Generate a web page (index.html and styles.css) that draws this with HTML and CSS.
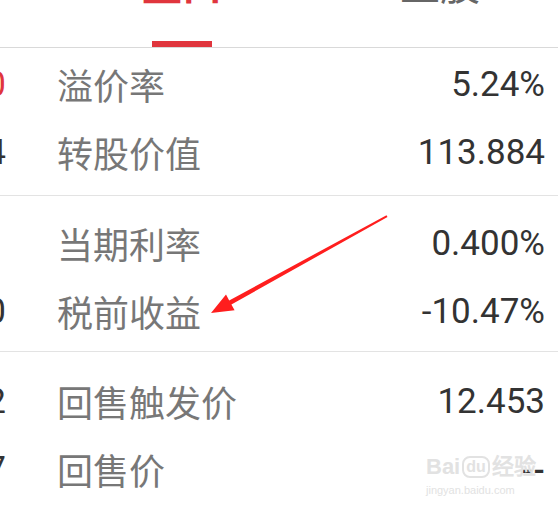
FILE: index.html
```html
<!DOCTYPE html>
<html lang="zh-CN">
<head>
  <meta charset="UTF-8">
  <title>转债盘口</title>
  <link rel="stylesheet" href="styles.css">
</head>
<body>
  <div class="page">
    <div class="tabs">
      <div class="tab active">
        <span class="tab-text">盘口</span>
        <span class="tab-bar"></span>
      </div>
      <div class="tab">
        <span class="tab-text">正股</span>
      </div>
    </div>

    <div class="group group-first">
      <div class="row">
        <span class="lead up">10.0</span>
        <span class="label">溢价率</span>
        <span class="value">5.24%</span>
      </div>
      <div class="row">
        <span class="lead">1.14</span>
        <span class="label">转股价值</span>
        <span class="value">113.884</span>
      </div>
    </div>

    <div class="group">
      <div class="row">
        <span class="lead">2021</span>
        <span class="label">当期利率</span>
        <span class="value">0.400%</span>
      </div>
      <div class="row">
        <span class="lead">3.50</span>
        <span class="label">税前收益</span>
        <span class="value">-10.47%</span>
      </div>
    </div>

    <div class="group group-last">
      <div class="row">
        <span class="lead">5.12</span>
        <span class="label">回售触发价</span>
        <span class="value">12.453</span>
      </div>
      <div class="row">
        <span class="lead">2027</span>
        <span class="label">回售价</span>
        <span class="value value-empty">--</span>
      </div>
    </div>

    <!-- red annotation arrow drawn over the list -->
    <svg class="arrow" width="558" height="510" viewBox="0 0 558 510">
      <polygon fill="#ff1e1e" points="211,313 226,294.6 229.2,300.4 386.5,215.2 387.5,217 231.4,304.4 234.6,310.2"/>
    </svg>

    <div class="watermark">
      <div class="wm-logo"><span>Bai</span><span class="wm-du">du</span><span>经验</span></div>
      <div class="wm-url">jingyan.baidu.com</div>
    </div>
  </div>
</body>
</html>
```

FILE: styles.css
```css
body {
  margin: 0;
  background: #ffffff;
}

.page {
  position: relative;
  width: 558px;
  height: 510px;
  overflow: hidden;
  background: #ffffff;
}

.tabs {
  display: flex;
  gap: 138px;
  height: 47px;
  padding-left: 122px;
  border-bottom: 1px solid #d9d9d9;
}

.tab {
  width: 120px;
  display: flex;
  flex-direction: column;
  align-items: center;
}

.tab-text {
  margin-top: -37px;
  font-family: "Noto Sans CJK SC", sans-serif;
  font-size: 40px;
  line-height: 40px;
  color: #666;
}

.tab.active .tab-text {
  color: #e0353d;
  font-weight: bold;
}

.tab-bar {
  margin-top: auto;
  width: 60px;
  height: 6px;
  background: #e0353d;
}

.group {
  padding: 13px 0 6px 0;
  border-bottom: 1px solid #e3e3e3;
}

.group-first {
  padding: 2px 0 9px 0;
}

.group-last {
  padding-top: 15px;
  border-bottom: none;
}

.row {
  display: flex;
  align-items: center;
  height: 68px;
}

.lead {
  flex-shrink: 0;
  width: 100px;
  margin-left: -94px;
  text-align: right;
  font-family: Roboto, sans-serif;
  font-size: 35px;
  color: #333;
}

.lead.up {
  color: #e0353d;
}

.label {
  margin-left: 51px;
  font-family: "Noto Sans CJK SC", sans-serif;
  font-size: 36px;
  color: #777;
}

.value {
  margin-left: auto;
  padding-right: 13px;
  font-family: Roboto, sans-serif;
  font-size: 35px;
  color: #333;
}

.value-empty {
  font-weight: bold;
  font-size: 30px;
}

.arrow {
  position: absolute;
  left: 0;
  top: 0;
  pointer-events: none;
}

.watermark {
  position: absolute;
  left: 426px;
  top: 455px;
  color: #e2e2e2;
  font-family: "Liberation Sans", sans-serif;
  pointer-events: none;
}

.wm-logo {
  display: flex;
  align-items: center;
  gap: 2px;
  font-size: 22px;
  font-weight: bold;
  line-height: 24px;
}

.wm-du {
  border: 2px solid #e2e2e2;
  border-radius: 8px;
  padding: 0 2px;
  font-size: 16px;
  line-height: 18px;
}

.wm-url {
  font-size: 11px;
  line-height: 14px;
  margin-top: 4px;
}
```
